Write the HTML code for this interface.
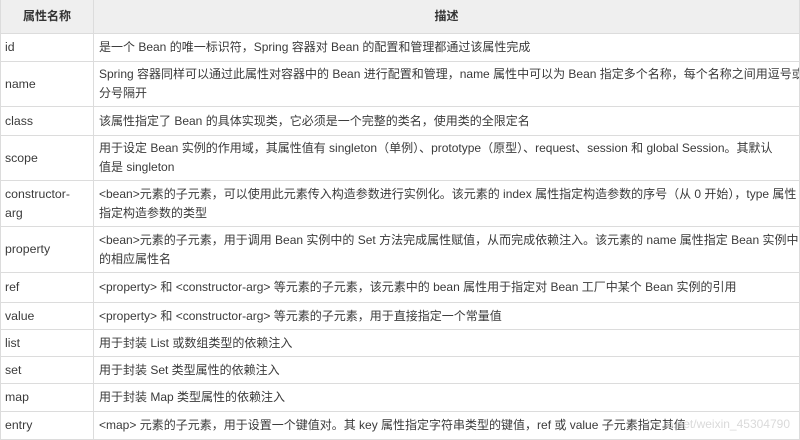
<!DOCTYPE html>
<html><head><meta charset="utf-8"><style>
body{margin:0;width:800px;height:437px;overflow:hidden;background:#fff;font-family:"Liberation Sans","Noto Sans CJK SC",sans-serif;font-size:12px;color:#3a3a3a;position:relative}
table{border-collapse:collapse;width:800px;table-layout:fixed;margin-top:-1px}
td,th{border:1px solid #dcdcdc;padding:0 5px;line-height:19px;vertical-align:middle;text-align:left;overflow:hidden;white-space:nowrap}
td:first-child{padding-left:4px;font-size:12.3px}
th{background:#efefef;font-weight:bold;text-align:center;color:#333;font-size:12px}
</style></head><body>
<table>
<col style="width:93px"><col>
<tr style="height:34px"><th>属性名称</th><th>描述</th></tr>
<tr style="height:28px"><td>id</td><td>是一个 Bean 的唯一标识符，Spring 容器对 Bean 的配置和管理都通过该属性完成</td></tr>
<tr style="height:45px"><td>name</td><td>Spring 容器同样可以通过此属性对容器中的 Bean 进行配置和管理，name 属性中可以为 Bean 指定多个名称，每个名称之间用逗号或<br>分号隔开</td></tr>
<tr style="height:29px"><td>class</td><td>该属性指定了 Bean 的具体实现类，它必须是一个完整的类名，使用类的全限定名</td></tr>
<tr style="height:45px"><td>scope</td><td>用于设定 Bean 实例的作用域，其属性值有 singleton（单例）、prototype（原型）、request、session 和 global Session。其默认<br>值是 singleton</td></tr>
<tr style="height:46px"><td>constructor-<br>arg</td><td>&lt;bean&gt;元素的子元素，可以使用此元素传入构造参数进行实例化。该元素的 index 属性指定构造参数的序号（从 0 开始），type 属性<br>指定构造参数的类型</td></tr>
<tr style="height:46px"><td>property</td><td>&lt;bean&gt;元素的子元素，用于调用 Bean 实例中的 Set 方法完成属性赋值，从而完成依赖注入。该元素的 name 属性指定 Bean 实例中<br>的相应属性名</td></tr>
<tr style="height:30px"><td>ref</td><td>&lt;property&gt; 和 &lt;constructor-arg&gt; 等元素的子元素，该元素中的 bean 属性用于指定对 Bean 工厂中某个 Bean 实例的引用</td></tr>
<tr style="height:27px"><td>value</td><td>&lt;property&gt; 和 &lt;constructor-arg&gt; 等元素的子元素，用于直接指定一个常量值</td></tr>
<tr style="height:27px"><td>list</td><td>用于封装 List 或数组类型的依赖注入</td></tr>
<tr style="height:27px"><td>set</td><td>用于封装 Set 类型属性的依赖注入</td></tr>
<tr style="height:28px"><td>map</td><td>用于封装 Map 类型属性的依赖注入</td></tr>
<tr style="height:28px"><td>entry</td><td>&lt;map&gt; 元素的子元素，用于设置一个键值对。其 key 属性指定字符串类型的键值，ref 或 value 子元素指定其值</td></tr>
</table>
<div style="position:absolute;right:10px;top:418px;color:#dadada;font-size:12px">o.net/weixin_45304790</div>
</body></html>
